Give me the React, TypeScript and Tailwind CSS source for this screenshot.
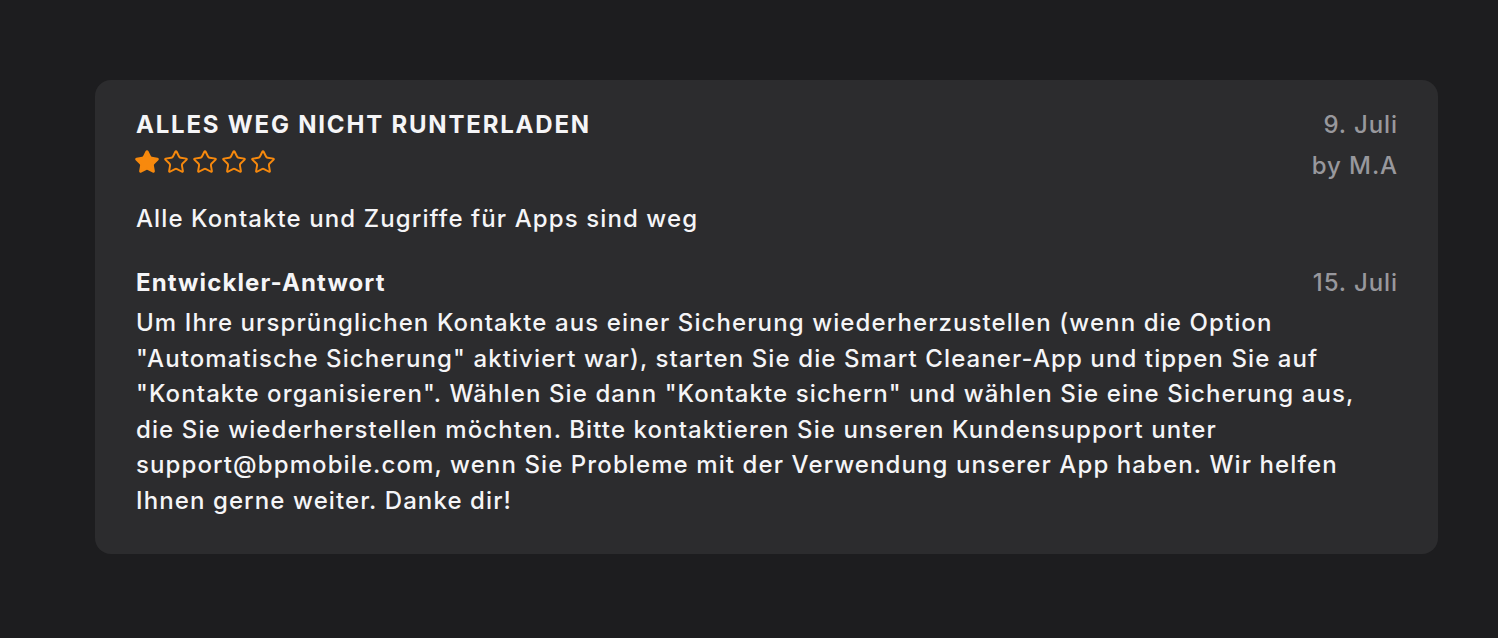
import { Star } from 'lucide-react';

function Stars({ rating }: { rating: number }) {
  return (
    <div className="flex gap-[3px] mt-[7px] -ml-[2px]">
      {[1, 2, 3, 4, 5].map((i) => (
        <Star
          key={i}
          size={26}
          strokeWidth={1.8}
          className="text-[#f7890d]"
          fill={i <= rating ? '#f7890d' : 'none'}
        />
      ))}
    </div>
  );
}

export default function App() {
  return (
    <div className="min-h-[638px] w-full bg-[#1d1d1f] pt-[80px] pl-[95px] pr-[60px] font-['Inter',sans-serif]">
      <div className="w-[1343px] h-[474px] rounded-[16px] bg-[#2c2c2e] pt-[28px] pr-[40px] pl-[41px] text-[#f5f5f7] tracking-[1.1px]">
        <div className="flex justify-between">
          <div>
            <h1 className="text-[24px] leading-[34px] font-bold tracking-[1.8px]">ALLES WEG NICHT RUNTERLADEN</h1>
            <Stars rating={1} />
          </div>
          <div className="text-right text-[24px] text-[#98989d] font-medium tracking-[0.9px]">
            <div className="leading-[34px]">9. Juli</div>
            <div className="leading-[48px]">by M.A</div>
          </div>
        </div>

        <p className="mt-[11px] text-[24px] leading-[36px] font-medium">
          Alle Kontakte und Zugriffe für Apps sind weg
        </p>

        <div className="mt-[28px] flex justify-between">
          <span className="text-[24px] leading-[36px] font-bold">Entwickler-Antwort</span>
          <span className="text-[24px] leading-[36px] text-[#98989d] font-medium tracking-[0.9px]">15. Juli</span>
        </div>
        <p className="mt-[4px] text-[24px] leading-[35.6px] font-medium whitespace-nowrap">
          Um Ihre ursprünglichen Kontakte aus einer Sicherung wiederherzustellen (wenn die Option<br />
          "Automatische Sicherung" aktiviert war), starten Sie die Smart Cleaner-App und tippen Sie auf<br />
          "Kontakte organisieren". Wählen Sie dann "Kontakte sichern" und wählen Sie eine Sicherung aus,<br />
          die Sie wiederherstellen möchten. Bitte kontaktieren Sie unseren Kundensupport unter<br />
          support@bpmobile.com, wenn Sie Probleme mit der Verwendung unserer App haben. Wir helfen<br />
          Ihnen gerne weiter. Danke dir!
        </p>
      </div>
    </div>
  );
}
